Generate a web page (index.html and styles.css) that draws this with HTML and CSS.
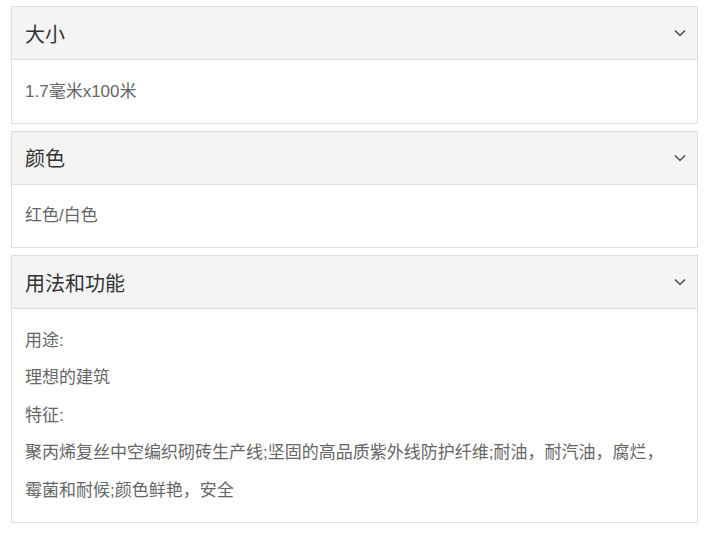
FILE: index.html
```html
<!DOCTYPE html>
<html>

<head>
    <meta charset="utf-8" />
    <title>产品参数</title>
    <link rel="stylesheet" href="styles.css">
</head>

<body>
    <div class="specs">
        <div class="panel">
            <div class="panel-head">
                <span>大小</span>
                <svg class="arrow" width="12" height="8" viewBox="0 0 12 8"><path d="M1 1.5l5 5 5-5" /></svg>
            </div>
            <div class="panel-body">
                <p>1.7毫米x100米</p>
            </div>
        </div>
        <div class="panel">
            <div class="panel-head">
                <span>颜色</span>
                <svg class="arrow" width="12" height="8" viewBox="0 0 12 8"><path d="M1 1.5l5 5 5-5" /></svg>
            </div>
            <div class="panel-body">
                <p>红色/白色</p>
            </div>
        </div>
        <div class="panel">
            <div class="panel-head">
                <span>用法和功能</span>
                <svg class="arrow" width="12" height="8" viewBox="0 0 12 8"><path d="M1 1.5l5 5 5-5" /></svg>
            </div>
            <div class="panel-body">
                <p>用途:</p>
                <p>理想的建筑</p>
                <p>特征:</p>
                <p>聚丙烯复丝中空编织砌砖生产线;坚固的高品质紫外线防护纤维;耐油，耐汽油，腐烂，霉菌和耐候;颜色鲜艳，安全</p>
            </div>
        </div>
    </div>
</body>

</html>
```

FILE: styles.css
```css
body,
p {
    margin: 0;
    padding: 0;
}

body {
    background: #fff;
    font-family: "Liberation Sans", "Noto Sans CJK SC", sans-serif;
}

.specs {
    width: 687px;
    padding: 6px 0 0 11px;
}

.panel {
    border: 1px solid #dedede;
    margin-bottom: 7px;
}

.panel-head {
    display: flex;
    align-items: center;
    justify-content: space-between;
    height: 52px;
    padding: 0 11px 0 13px;
    background: #f4f4f4;
    border-bottom: 1px solid #dedede;
    font-size: 20px;
    color: #333;
}

.arrow path {
    fill: none;
    stroke: #333;
    stroke-width: 1.2;
}

.panel-body {
    padding: 12.5px 24px 12.5px 13px;
    font-size: 17px;
    line-height: 37.5px;
    color: #666;
}
```
